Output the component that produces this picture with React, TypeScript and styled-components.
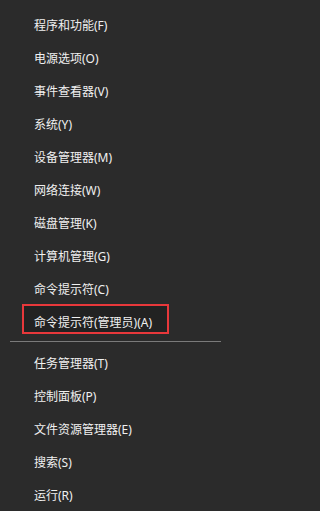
import styled, { createGlobalStyle } from "styled-components";

const GlobalStyle = createGlobalStyle`
  html, body {
    margin: 0;
    padding: 0;
    background: #2b2b2b;
  }
`;

const Menu = styled.nav`
  width: 231px;
  height: 511px;
  box-sizing: border-box;
  padding-top: 8px;
  background: #2b2b2b;
  font-family: "Noto Sans", "Noto Sans CJK SC", sans-serif;
  font-size: 12px;
  color: #f0f0f0;
  overflow: hidden;
`;

const Group = styled.ul`
  list-style: none;
  margin: 0;
  padding: 0;
`;

const Item = styled.li<{ $marked?: boolean }>`
  position: relative;
  height: 33px;
  display: flex;
  align-items: center;
  padding-left: 34px;
  white-space: nowrap;

  ${({ $marked }) =>
    $marked &&
    `
    &::before {
      content: "";
      position: absolute;
      left: 22px;
      top: -1px;
      width: 147px;
      height: 30px;
      box-sizing: border-box;
      border: 2px solid #e8383b;
      background: #222222;
    }
  `}
`;

const Label = styled.span`
  position: relative;
`;

const Separator = styled.hr`
  border: none;
  height: 1px;
  background: #7a7a7a;
  margin: 3px 10px 4px 10px;
`;

const top = [
  "程序和功能(F)",
  "电源选项(O)",
  "事件查看器(V)",
  "系统(Y)",
  "设备管理器(M)",
  "网络连接(W)",
  "磁盘管理(K)",
  "计算机管理(G)",
  "命令提示符(C)",
  "命令提示符(管理员)(A)",
];

const bottom = [
  "任务管理器(T)",
  "控制面板(P)",
  "文件资源管理器(E)",
  "搜索(S)",
  "运行(R)",
];

export default function App() {
  return (
    <>
      <GlobalStyle />
      <Menu>
        <Group>
          {top.map((label, i) => (
            <Item key={label} $marked={i === top.length - 1}>
              <Label>{label}</Label>
            </Item>
          ))}
        </Group>
        <Separator />
        <Group>
          {bottom.map((label) => (
            <Item key={label}>
              <Label>{label}</Label>
            </Item>
          ))}
        </Group>
      </Menu>
    </>
  );
}
